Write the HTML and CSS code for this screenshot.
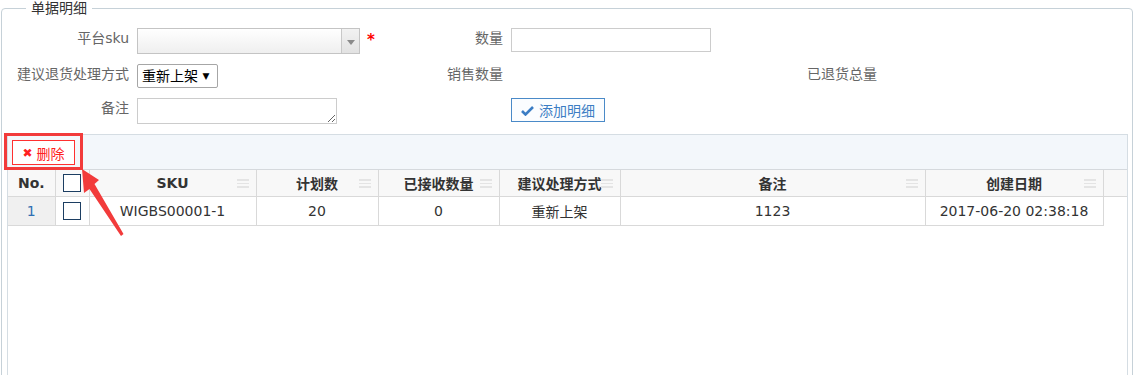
FILE: index.html
```html
<!DOCTYPE html>
<html lang="zh-CN">
<head>
    <meta charset="UTF-8">
    <title>单据明细</title>
    <link rel="stylesheet" href="styles.css">
</head>
<body>
    <fieldset class="detail-box">
        <legend>单据明细</legend>

        <div class="form-row">
            <div class="form-group">
                <label class="form-label">平台sku</label>
                <div class="combo">
                    <span class="combo-text"></span>
                    <span class="combo-arrow"><span class="tri"></span></span>
                </div>
                <span class="required">*</span>
            </div>
            <div class="form-group">
                <label class="form-label">数量</label>
                <div class="text-input"></div>
            </div>
        </div>

        <div class="form-row">
            <div class="form-group">
                <label class="form-label">建议退货处理方式</label>
                <div class="select-box">重新上架 <span class="select-tri">▼</span></div>
            </div>
            <div class="form-group">
                <label class="form-label">销售数量</label>
            </div>
            <div class="form-group">
                <label class="form-label">已退货总量</label>
            </div>
        </div>

        <div class="form-row">
            <div class="form-group">
                <label class="form-label">备注</label>
                <textarea class="memo"></textarea>
            </div>
            <div class="form-group">
                <span class="form-label"></span>
                <button class="add-btn">
                    <svg width="13" height="11" viewBox="0 0 13 11"><path d="M1 6 L4.5 9.5 L12 2" fill="none" stroke="#3b7dc4" stroke-width="2.6"/></svg>
                    添加明细
                </button>
            </div>
        </div>

        <div class="grid-panel">
            <div class="grid-toolbar">
                <button class="del-btn"><span class="del-x">✖</span>删除</button>
            </div>
            <table class="grid">
                <colgroup>
                    <col style="width:47px">
                    <col style="width:34px">
                    <col style="width:167px">
                    <col style="width:122px">
                    <col style="width:121px">
                    <col style="width:121px">
                    <col style="width:305px">
                    <col style="width:178px">
                    <col>
                </colgroup>
                <thead>
                    <tr>
                        <th class="no-col">No.</th>
                        <th><span class="cb"></span></th>
                        <th>SKU<span class="col-menu"></span></th>
                        <th>计划数<span class="col-menu"></span></th>
                        <th>已接收数量<span class="col-menu"></span></th>
                        <th>建议处理方式<span class="col-menu"></span></th>
                        <th>备注<span class="col-menu"></span></th>
                        <th>创建日期<span class="col-menu"></span></th>
                        <th class="filler"></th>
                    </tr>
                </thead>
                <tbody>
                    <tr>
                        <td class="no-cell">1</td>
                        <td><span class="cb"></span></td>
                        <td>WIGBS00001-1</td>
                        <td>20</td>
                        <td>0</td>
                        <td>重新上架</td>
                        <td>1123</td>
                        <td>2017-06-20 02:38:18</td>
                        <td class="filler"></td>
                    </tr>
                </tbody>
            </table>
        </div>
    </fieldset>

    <!-- 标注 -->
    <div class="mark-box"></div>
    <svg class="mark-arrow" width="60" height="80" viewBox="75 165 60 80">
        <polygon points="82,169 99,180 94.5,184 123.5,234 121,236 89.5,189 84,193" fill="#f23b3b"/>
    </svg>
</body>
</html>
```

FILE: styles.css
```css
* {
    box-sizing: border-box;
}

body {
    margin: 0;
    height: 375px;
    font-family: "DejaVu Sans", "Noto Sans CJK SC", sans-serif;
    font-size: 14px;
    color: #333;
    background: #fff;
    overflow: hidden;
}

.detail-box {
    margin: 0 4px 0 1px;
    padding: 12px 0 0 0;
    border: 1px solid #c6d1d8;
    border-radius: 4px;
    min-height: 420px;
}

.detail-box legend {
    margin-left: 24px;
    padding: 0 5px;
    font-size: 14px;
    line-height: 16px;
    color: #333;
}

.form-row {
    display: flex;
    margin-bottom: 10px;
}

.form-group {
    display: flex;
    align-items: flex-start;
    width: 374px;
}

.form-label {
    width: 127px;
    margin-right: 8px;
    text-align: right;
    line-height: 20px;
    color: #666;
    flex-shrink: 0;
}

.combo {
    display: flex;
    width: 223px;
    height: 26px;
    border: 1px solid #c4c4c4;
    background: linear-gradient(#ffffff, #efefef);
}

.combo-text {
    flex: 1;
}

.combo-arrow {
    width: 18px;
    border-left: 1px solid #c8c8c8;
    background: linear-gradient(#f2f2f2, #e2e2e2);
    display: flex;
    align-items: center;
    justify-content: center;
}

.tri {
    width: 0;
    height: 0;
    border-left: 4px solid transparent;
    border-right: 4px solid transparent;
    border-top: 5px solid #8a8a8a;
    margin-top: 2px;
}

.required {
    color: #ff0000;
    font-weight: bold;
    margin-left: 7px;
    line-height: 24px;
    font-size: 15px;
}

.text-input {
    width: 200px;
    height: 24px;
    border: 1px solid #cccccc;
    background: #fff;
}

.select-box {
    width: 81px;
    height: 24px;
    border: 1px solid #a6a6a6;
    border-radius: 2px;
    padding-left: 4px;
    line-height: 22px;
    color: #000;
    white-space: nowrap;
}

.select-tri {
    font-size: 9px;
    vertical-align: 2px;
}

.memo {
    width: 200px;
    height: 26px;
    border: 1px solid #cccccc;
    margin: 0;
    padding: 0;
}

.add-btn {
    width: 94px;
    height: 24px;
    border: 1px solid #4a8ac8;
    background: #fbfdff;
    color: #3b7dc4;
    font-family: inherit;
    font-size: 14px;
    padding: 0;
    display: flex;
    align-items: center;
    justify-content: center;
    gap: 5px;
}

.grid-panel {
    margin: 0 4px 0 5px;
    border: 1px solid #d5dde3;
    border-bottom: none;
    min-height: 300px;
}

.grid-toolbar {
    height: 35px;
    background: #f3f7fb;
    border-bottom: 1px solid #d5d9dd;
    padding: 5px 0 0 4px;
}

.del-btn {
    width: 63px;
    height: 25px;
    border: 1px solid #ff3030;
    background: #fff;
    color: #ff2020;
    font-family: inherit;
    font-size: 14px;
    padding: 0;
    display: flex;
    align-items: center;
    justify-content: center;
    gap: 4px;
}

.del-x {
    font-size: 12px;
    font-weight: bold;
}

.grid {
    width: 100%;
    table-layout: fixed;
    border-collapse: collapse;
}

.grid th,
.grid td {
    border: 1px solid #d9d9d9;
    text-align: center;
    padding: 0;
    white-space: nowrap;
    overflow: hidden;
}

.grid tr > :first-child {
    border-left: none;
}

.grid th {
    position: relative;
    height: 26px;
    background: #f8f8f8;
    font-weight: bold;
    border-top: none;
}

.grid td {
    height: 29px;
}

.grid td.filler {
    border: none;
    border-left: 1px solid #d9d9d9;
}

.grid th.filler {
    border-right: none;
}

.no-col {
    font-weight: bold;
}

.no-cell {
    background: #f0f0f0;
    color: #2f6fb3;
}

.cb {
    display: inline-block;
    width: 18px;
    height: 18px;
    border: 1.5px solid #1c3e62;
    background: #fff;
    vertical-align: middle;
}

.col-menu {
    position: absolute;
    right: 7px;
    top: 9px;
    width: 12px;
    height: 9px;
    border-top: 2px solid #e4e4e4;
    border-bottom: 2px solid #e4e4e4;
    background: linear-gradient(transparent 37%, #e4e4e4 37%, #e4e4e4 70%, transparent 70%);
}

.mark-box {
    position: absolute;
    left: 4px;
    top: 133px;
    width: 79px;
    height: 37px;
    border: 3px solid #f23b3b;
}

.mark-arrow {
    position: absolute;
    left: 75px;
    top: 165px;
}
```
